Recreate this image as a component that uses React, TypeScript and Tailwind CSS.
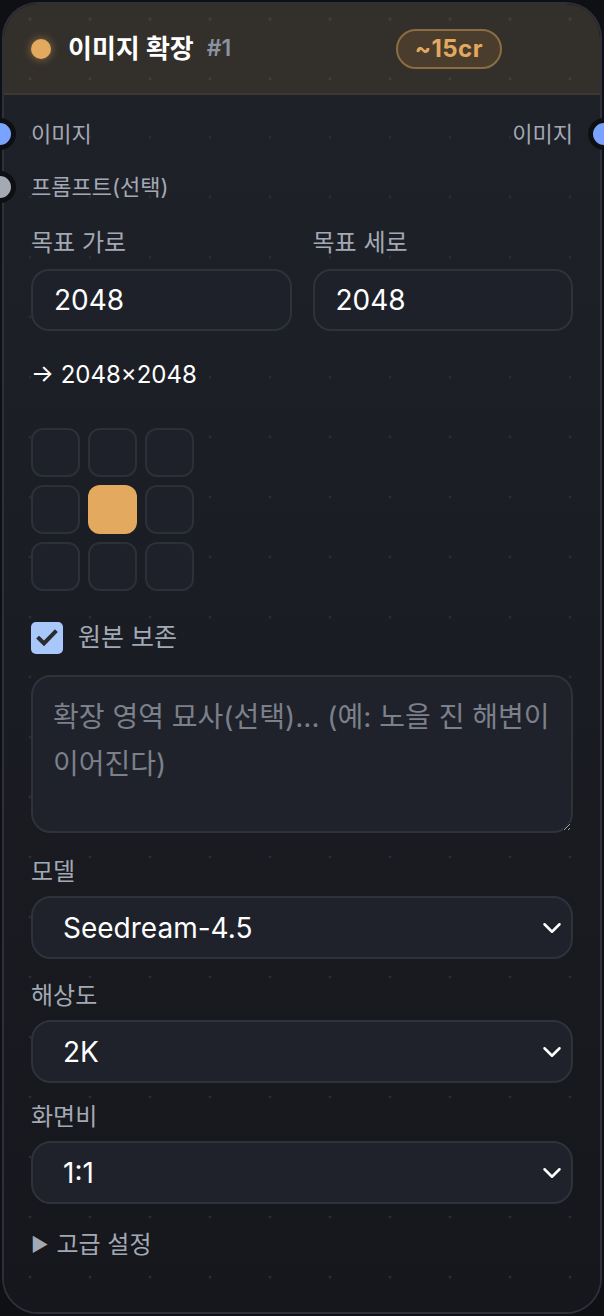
import React from "react";
import { ChevronDown } from "lucide-react";

const Handle = ({ side, color }: { side: "left" | "right"; color: string }) => (
  <span
    className={`absolute top-1/2 -translate-y-1/2 w-[32px] h-[32px] rounded-full border-[5px] border-[#0e0f12] ${color} ${
      side === "left" ? "left-[-20px]" : "right-[-20px]"
    }`}
  />
);

const Field = ({ label, value }: { label: string; value: string }) => (
  <div className="flex-1 flex flex-col">
    <div className="text-[24px] leading-[30px] text-[#a3a9b4]">{label}</div>
    <div className="mt-[11px] h-[62px] rounded-[18px] border-2 border-[#2e323b] bg-[#1e2129] flex items-center px-[21px] text-[28px] text-white">
      {value}
    </div>
  </div>
);

const SelectBox = ({ label, value, mt }: { label: string; value: string; mt: string }) => (
  <div className={`flex flex-col ${mt}`}>
    <div className="text-[24px] leading-[30px] text-[#a3a9b4]">{label}</div>
    <div className="mt-[9px] h-[63px] rounded-[20px] border-2 border-[#2e323b] bg-[#1f222a] flex items-center justify-between pl-[30px] pr-[4px] text-[28px] text-white">
      <span>{value}</span>
      <ChevronDown className="w-[30px] h-[30px] text-white" strokeWidth={2} />
    </div>
  </div>
);

export default function App() {
  const cells = Array.from({ length: 9 }, (_, i) => i);

  return (
    <div className="w-[604px] h-[1316px] bg-[#0e1014] p-[2px] font-['Inter','Noto_Sans_CJK_KR',sans-serif]">
      <div className="relative w-[600px] h-[1312px] rounded-[36px] border-2 border-[#2d3038] flex flex-col">
        {/* header */}
        <div className="h-[91px] shrink-0 rounded-t-[34px] border-b-2 border-[#3b3834] bg-[#332f2b] bg-[image:radial-gradient(circle_at_30px_30px,#433e37_1.3px,transparent_1.8px)] bg-[size:60px_60px] bg-[position:-4px_-15px] flex items-center pl-[27px] pr-[98px]">
          <span className="w-[20px] h-[20px] rounded-full bg-[#e3a95e] shadow-[0_0_10px_rgba(227,169,94,0.55)]" />
          <span className="ml-[17px] text-[26px] font-bold text-white">이미지 확장</span>
          <span className="ml-[13px] text-[23px] font-semibold text-[#8b93a3]">#1</span>
          <span className="ml-auto h-[40px] px-[17px] rounded-full border-2 border-[#8c6c43] bg-[#4a3d2d] flex items-center text-[24px] font-bold text-[#e3a95e] tracking-[0.5px]">
            ~15cr
          </span>
        </div>

        {/* body */}
        <div className="flex-1 rounded-b-[34px] bg-[image:radial-gradient(circle_at_30px_30px,#2a2d35_1.2px,transparent_1.7px),linear-gradient(to_bottom,#1f2129,#15171c)] bg-[size:60px_60px,100%_100%] bg-[position:-4px_12px,0_0] px-[27px] pt-[19px] flex flex-col">
          <div className="relative h-[40px] flex items-center justify-between text-[22px] text-[#a3a9b4]">
            <span>이미지</span>
            <span>이미지</span>
            <span className="absolute left-[-27px] top-1/2">
              <Handle side="left" color="bg-[#7aa2ff]" />
            </span>
            <span className="absolute right-[-27px] top-1/2">
              <Handle side="right" color="bg-[#7aa2ff]" />
            </span>
          </div>
          <div className="relative mt-[13px] h-[40px] flex items-center text-[22px] text-[#a3a9b4]">
            <span>프롬프트(선택)</span>
            <span className="absolute left-[-27px] top-1/2">
              <Handle side="left" color="bg-[#a4a9b3]" />
            </span>
          </div>

          <div className="mt-[21px] flex gap-[21px]">
            <Field label="목표 가로" value="2048" />
            <Field label="목표 세로" value="2048" />
          </div>

          <div className="mt-[28px] h-[32px] flex items-center text-[24px] text-white">→ 2048×2048</div>

          <div className="mt-[37px] grid grid-cols-[49px_49px_49px] gap-[8px]">
            {cells.map((i) => (
              <div
                key={i}
                className={`h-[49px] rounded-[12px] ${
                  i === 4 ? "bg-[#e2a95f]" : "border-2 border-[#2c3039] bg-[#1e2129]"
                }`}
              />
            ))}
          </div>

          <div className="mt-[31px] h-[32px] flex items-center gap-[15px]">
            <span className="w-[32px] h-[32px] rounded-[5px] bg-[#a8c7fa] flex items-center justify-center">
              <svg width="24" height="24" viewBox="0 0 24 24">
                <path d="M4 12.5l5 5L20 6" fill="none" stroke="#2b2c30" strokeWidth="4" strokeLinecap="square" />
              </svg>
            </span>
            <span className="text-[25px] text-[#a3a9b4]">원본 보존</span>
          </div>

          <textarea
            className="mt-[21px] h-[158px] w-full rounded-[20px] border-2 border-[#2e323b] bg-[#1f222a] px-[20px] pt-[17px] pb-[14px] text-[28px] leading-[47px] break-keep text-white placeholder:text-[#7b808a] outline-none resize-y [color-scheme:dark]"
            placeholder="확장 영역 묘사(선택)... (예: 노을 진 해변이 이어진다)"
          />

          <SelectBox label="모델" value="Seedream-4.5" mt="mt-[24px]" />
          <SelectBox label="해상도" value="2K" mt="mt-[22px]" />
          <SelectBox label="화면비" value="1:1" mt="mt-[19px]" />

          <div className="mt-[26px] h-[30px] flex items-center gap-[8px] text-[24px] text-[#a3a9b4]">
            <span className="text-[19px]">▶</span>
            <span>고급 설정</span>
          </div>
        </div>
      </div>
    </div>
  );
}
